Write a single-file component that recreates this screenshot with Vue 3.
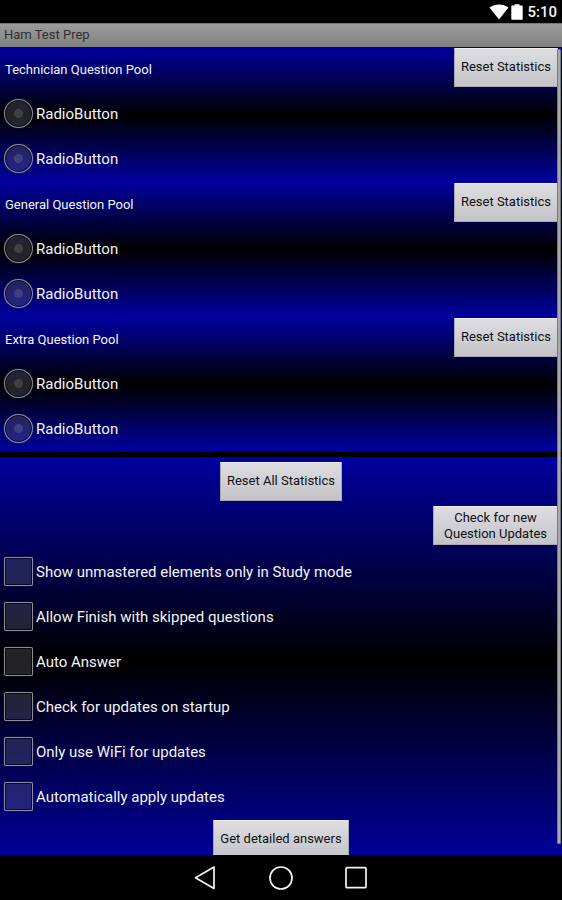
<template>
  <div class="screen">
    <div class="status-bar">
      <svg class="wifi" viewBox="0 0 20 16" aria-hidden="true">
        <path d="M0.5 3.6C6 -0.4 14 -0.4 19.5 3.6L10 15.5Z" fill="#fff" />
      </svg>
      <svg class="battery" viewBox="0 0 12 16" aria-hidden="true">
        <path d="M3.500 0.300h5v1.200H11a.7.7 0 0 1 .7.7v12.900a.7.7 0 0 1-.7.7H1a.7.7 0 0 1-.7-.7V2.200a.7.7 0 0 1 .7-.7h2.500z" fill="#fff" />
      </svg>
      <span class="clock">5:10</span>
    </div>

    <header class="title-bar">Ham Test Prep</header>

    <div class="content">
      <main class="scroll">
        <section v-for="pool in pools" :key="pool.id" class="pool">
          <div class="pool-header">
            <h2>{{ pool.title }}</h2>
            <button type="button" class="btn" @click="resetPool(pool)">Reset Statistics</button>
          </div>
          <label v-for="n in 2" :key="n" class="option">
            <input v-model="pool.selected" type="radio" :name="pool.id" :value="n">
            <span>RadioButton</span>
          </label>
        </section>

        <section class="settings">
          <div class="center">
            <button type="button" class="btn" @click="resetAll">Reset All Statistics</button>
          </div>
          <div class="right">
            <button type="button" class="btn btn-wide">Check for new<br>Question Updates</button>
          </div>
          <label v-for="item in settings" :key="item.label" class="option">
            <input v-model="item.checked" type="checkbox">
            <span>{{ item.label }}</span>
          </label>
          <div class="center last">
            <button type="button" class="btn">Get detailed answers</button>
          </div>
        </section>
      </main>
      <div class="scroll-thumb"></div>
    </div>

    <nav class="nav-bar">
      <button type="button" aria-label="Back">
        <svg viewBox="0 0 24 24"><path d="M20 1V22.500L1.500 11.700Z" /></svg>
      </button>
      <button type="button" aria-label="Home">
        <svg viewBox="0 0 24 24"><circle cx="12" cy="12" r="11" /></svg>
      </button>
      <button type="button" aria-label="Recent apps">
        <svg viewBox="0 0 24 24"><rect x="2" y="1.700" width="20" height="20" rx="1" /></svg>
      </button>
    </nav>
  </div>
</template>

<script setup>
import { ref } from 'vue'

const pools = ref([
  { id: 'technician', title: 'Technician Question Pool', selected: null },
  { id: 'general', title: 'General Question Pool', selected: null },
  { id: 'extra', title: 'Extra Question Pool', selected: null }
])

const settings = ref([
  { label: 'Show unmastered elements only in Study mode', checked: false },
  { label: 'Allow Finish with skipped questions', checked: false },
  { label: 'Auto Answer', checked: false },
  { label: 'Check for updates on startup', checked: false },
  { label: 'Only use WiFi for updates', checked: false },
  { label: 'Automatically apply updates', checked: false }
])

const resetPool = (pool) => {
  pool.selected = null
}

const resetAll = () => {
  pools.value.forEach(resetPool)
}
</script>

<style>
body {
  margin: 0;
  background: #000;
}
</style>

<style scoped>
.screen {
  display: flex;
  flex-direction: column;
  height: 100vh;
  background: #000;
  color: #f4f4f4;
  font-family: Roboto, sans-serif;
}

.screen * {
  box-sizing: border-box;
}

.status-bar {
  display: flex;
  flex: none;
  align-items: center;
  justify-content: flex-end;
  height: 23px;
  padding-right: 5px;
}

.wifi {
  width: 20px;
  height: 16px;
  margin-right: 2px;
}

.battery {
  width: 12px;
  height: 16px;
  margin-right: 4px;
}

.clock {
  font-size: 15px;
  font-weight: 500;
  line-height: 24px;
}

.title-bar {
  flex: none;
  height: 24px;
  padding-left: 4px;
  border-top: 1px solid #777;
  border-bottom: 1px solid #808080;
  background: linear-gradient(#9b9b9b, #828282);
  color: #303030;
  font-size: 13px;
  line-height: 22px;
}

.content {
  position: relative;
  flex: 1;
  min-height: 0;
}

.scroll {
  height: 100%;
  overflow-y: auto;
  scrollbar-width: none;
}

.scroll-thumb {
  position: absolute;
  top: 2px;
  right: 1px;
  bottom: 11px;
  width: 4px;
  border: 1px solid #777;
  border-radius: 1px;
  background: #aaa;
}

.pool,
.settings {
  background: linear-gradient(#0000a0, #000 50%, #0000a0);
}

.pool-header {
  display: flex;
  align-items: center;
  justify-content: space-between;
  height: 45px;
  padding: 0 4px 4px 5px;
}

h2 {
  margin: 3px 0 0;
  font-size: 13px;
  font-weight: 400;
}

.btn {
  height: 39px;
  padding: 0 6px 2px;
  border: 1px solid #aaaaae;
  border-top-color: #f0f0f4;
  border-radius: 1px;
  background: linear-gradient(#dedee2, #c4c4c8);
  color: #101010;
  font-family: inherit;
  font-size: 13px;
  line-height: 16px;
}

.btn-wide {
  padding: 0 10px;
}

.option {
  display: flex;
  align-items: center;
  height: 45px;
  padding-left: 4px;
  font-size: 15px;
}

.pool .option {
  padding-bottom: 2px;
}

.option input {
  flex: none;
  width: 29px;
  height: 29px;
  margin: 0 3px 0 0;
  border: 1px solid rgba(175, 175, 175, 0.8);
  appearance: none;
  background: rgba(160, 160, 160, 0.22);
  background-clip: padding-box;
  box-shadow: inset 0 0 0 1px rgba(0, 0, 0, 0.7), 0 0 1px rgba(175, 175, 175, 0.6);
}

.option input[type='radio'] {
  border-radius: 50%;
  background: radial-gradient(circle, rgba(160, 160, 160, 0.4) 4px, rgba(160, 160, 160, 0.22) 5px);
  background-clip: padding-box;
}

.option input[type='radio']:checked {
  background: radial-gradient(circle, #8bd02c 4px, rgba(160, 160, 160, 0.22) 5px);
}

.option input[type='checkbox'] {
  border-radius: 2px;
}

.option input[type='checkbox']:checked {
  background: #8bd02c;
}

.settings {
  border-top: 5px solid #000;
  background-clip: padding-box;
}

.center,
.right {
  display: flex;
  height: 44px;
  padding-top: 5px;
}

.center {
  justify-content: center;
}

.right {
  height: 48px;
  justify-content: flex-end;
  padding-right: 4px;
}

.last {
  height: 46px;
  padding-top: 1px;
}

.nav-bar {
  display: flex;
  flex: none;
  align-items: center;
  justify-content: center;
  gap: 51px;
  height: 45px;
}

.nav-bar button {
  display: flex;
  padding: 0;
  border: 0;
  background: none;
}

.nav-bar svg {
  width: 24px;
  height: 24px;
  fill: none;
  stroke: #f4f4f4;
  stroke-width: 1.7;
  stroke-linejoin: round;
}
</style>
